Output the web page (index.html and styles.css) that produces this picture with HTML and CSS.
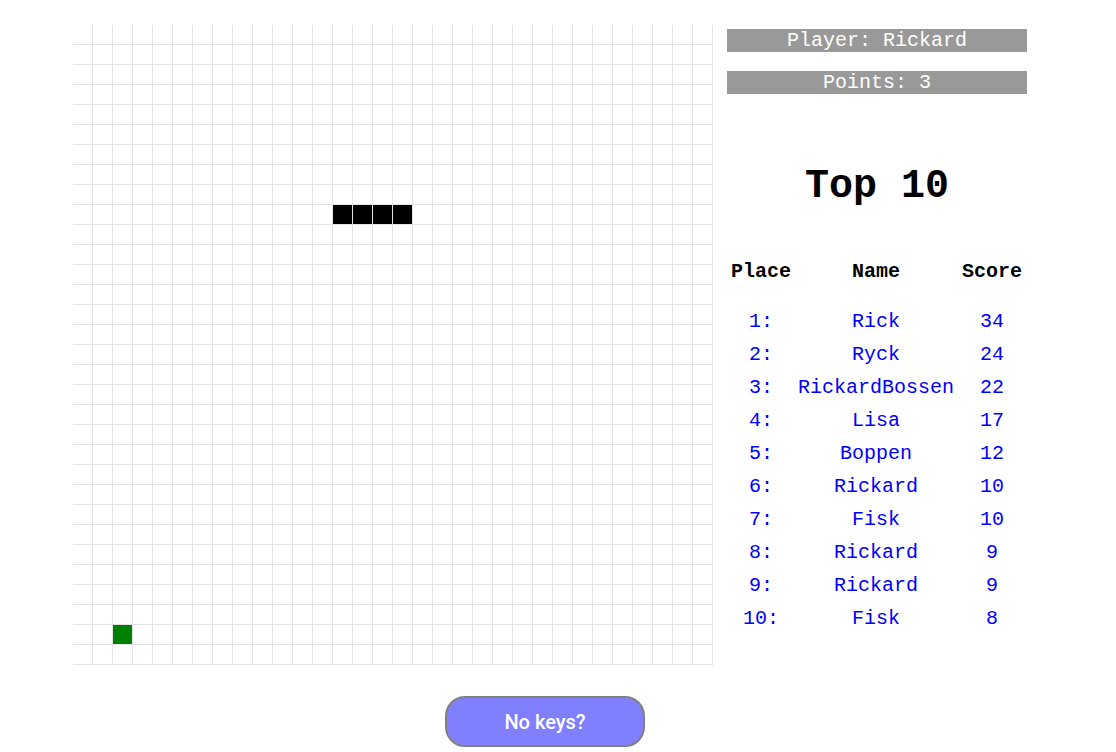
FILE: index.html
```html
<!DOCTYPE html>
<html>
<head>
<meta charset="utf-8">
<title>Snake</title>
<link rel="stylesheet" href="styles.css">
</head>
<body>
<div class="page">
  <div class="main">
    <div class="board">
      <div class="cell snake" style="grid-column:14;grid-row:10"></div>
      <div class="cell snake" style="grid-column:15;grid-row:10"></div>
      <div class="cell snake" style="grid-column:16;grid-row:10"></div>
      <div class="cell snake" style="grid-column:17;grid-row:10"></div>
      <div class="cell food" style="grid-column:3;grid-row:31"></div>
    </div>
    <div class="panel">
      <div class="bar bar-player">Player: Rickard</div>
      <div class="bar bar-points">Points: 3</div>
      <h1 class="title">Top 10</h1>
      <div class="scores">
        <div class="head">Place</div><div class="head">Name</div><div class="head">Score</div>
        <div class="sp"></div>
        <div class="c">1:</div><div class="c">Rick</div><div class="c">34</div>
        <div class="c">2:</div><div class="c">Ryck</div><div class="c">24</div>
        <div class="c">3:</div><div class="c">RickardBossen</div><div class="c">22</div>
        <div class="c">4:</div><div class="c">Lisa</div><div class="c">17</div>
        <div class="c">5:</div><div class="c">Boppen</div><div class="c">12</div>
        <div class="c">6:</div><div class="c">Rickard</div><div class="c">10</div>
        <div class="c">7:</div><div class="c">Fisk</div><div class="c">10</div>
        <div class="c">8:</div><div class="c">Rickard</div><div class="c">9</div>
        <div class="c">9:</div><div class="c">Rickard</div><div class="c">9</div>
        <div class="c">10:</div><div class="c">Fisk</div><div class="c">8</div>
      </div>
    </div>
  </div>
  <button class="nokeys">No keys?</button>
</div>
</body>
</html>
```
FILE: styles.css
```css
html, body {
  margin: 0;
  padding: 0;
  background: #ffffff;
}
.page {
  padding: 25px 0 0 73px;
}
.main {
  display: flex;
  gap: 14px;
  align-items: flex-start;
}
.board {
  width: 640px;
  height: 640px;
  display: grid;
  grid-template-columns: repeat(32, 20px);
  grid-template-rows: repeat(32, 20px);
  background-image:
    linear-gradient(to right, transparent 19px, #e3e3e3 19px, #e3e3e3 20px),
    linear-gradient(to bottom, transparent 19px, #e3e3e3 19px, #e3e3e3 20px);
  background-size: 20px 20px;
}
.cell {
  width: 19px;
  height: 19px;
}
.snake { background: #000000; }
.food { background: #008000; }
.panel {
  width: 300px;
  font-family: "Liberation Mono", "Courier New", monospace;
  font-size: 20px;
}
.bar {
  background: #999999;
  color: #ffffff;
  height: 23px;
  line-height: 23px;
  text-align: center;
}
.bar-player { margin-top: 4px; }
.bar-points { margin-top: 19px; }
.title {
  margin: 70px 0 0 0;
  font-size: 40px;
  line-height: 46px;
  height: 46px;
  font-weight: bold;
  text-align: center;
  color: #000;
}
.scores {
  margin-top: 45px;
  display: grid;
  grid-template-columns: 68px 162px 70px;
  grid-template-rows: 33px 17px;
  grid-auto-rows: 33px;
  line-height: 33px;
  text-align: center;
}
.head {
  font-weight: bold;
  color: #000;
}
.sp {
  grid-column: 1 / 4;
  grid-row: 2;
}
.c {
  color: #0000ff;
  white-space: nowrap;
}
.nokeys {
  display: block;
  margin: 31px 0 0 372px;
  width: 200px;
  height: 51px;
  box-sizing: border-box;
  background: #8080ff;
  border: 2px solid #808080;
  border-radius: 20px;
  color: #ffffff;
  font-family: Roboto, "Liberation Sans", Arial, sans-serif;
  font-weight: 500;
  font-size: 20px;
  padding: 0;
}
```
